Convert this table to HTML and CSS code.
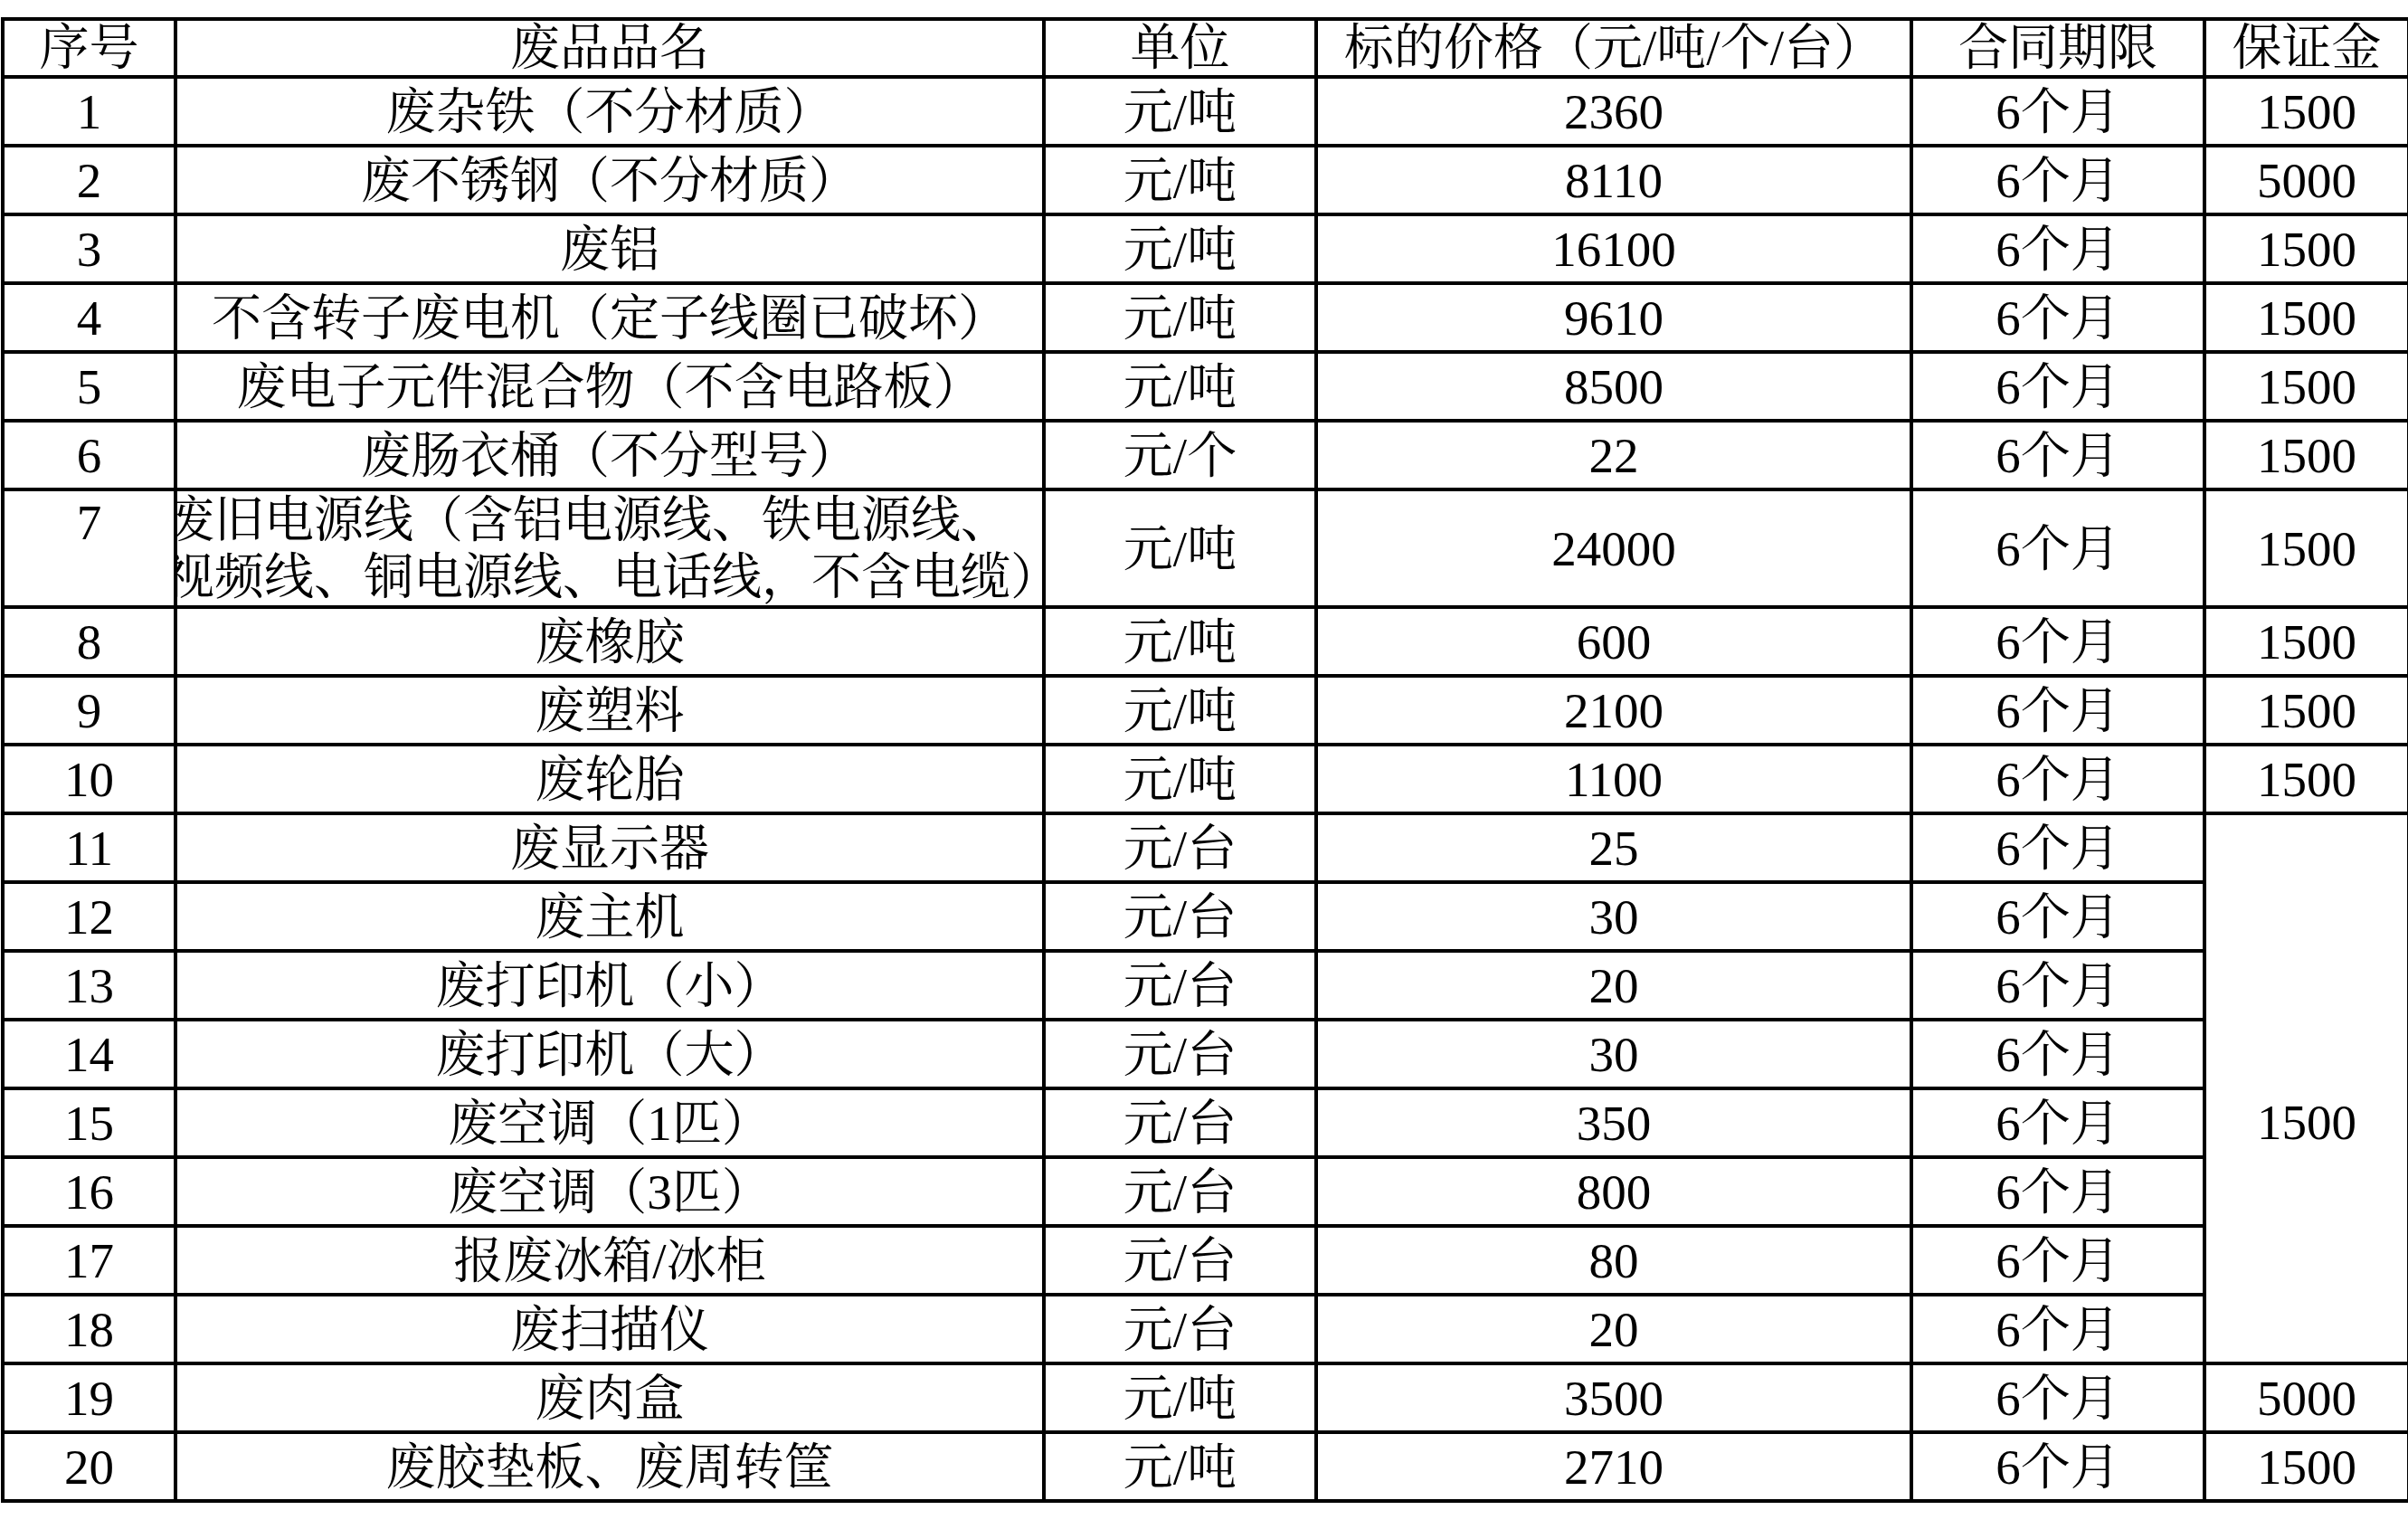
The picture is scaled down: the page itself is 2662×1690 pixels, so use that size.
FILE: index.html
```html
<!DOCTYPE html>
<html lang="zh-CN">
<head>
<meta charset="utf-8">
<title>废品价格表</title>
<link rel="stylesheet" href="styles.css">
</head>
<body>
<table class="sheet">
  <colgroup>
    <col class="c-seq">
    <col class="c-name">
    <col class="c-unit">
    <col class="c-price">
    <col class="c-term">
    <col class="c-dep">
  </colgroup>
  <tbody>
    <tr class="head"><td>序号</td><td>废品品名</td><td>单位</td><td>标的价格（元/吨/个/台）</td><td>合同期限</td><td>保证金</td></tr>
    <tr><td>1</td><td>废杂铁（不分材质）</td><td>元/吨</td><td>2360</td><td>6个月</td><td>1500</td></tr>
    <tr><td>2</td><td>废不锈钢（不分材质）</td><td>元/吨</td><td>8110</td><td>6个月</td><td>5000</td></tr>
    <tr><td>3</td><td>废铝</td><td>元/吨</td><td>16100</td><td>6个月</td><td>1500</td></tr>
    <tr><td>4</td><td>不含转子废电机（定子线圈已破坏）</td><td>元/吨</td><td>9610</td><td>6个月</td><td>1500</td></tr>
    <tr><td>5</td><td>废电子元件混合物（不含电路板）</td><td>元/吨</td><td>8500</td><td>6个月</td><td>1500</td></tr>
    <tr><td>6</td><td>废肠衣桶（不分型号）</td><td>元/个</td><td>22</td><td>6个月</td><td>1500</td></tr>
    <tr class="tall"><td class="top">7</td><td class="wrap"><div class="wrap-text"><span>废旧电源线（含铝电源线、铁电源线、</span><span>视频线、铜电源线、电话线，不含电缆）</span></div></td><td>元/吨</td><td>24000</td><td>6个月</td><td>1500</td></tr>
    <tr><td>8</td><td>废橡胶</td><td>元/吨</td><td>600</td><td>6个月</td><td>1500</td></tr>
    <tr><td>9</td><td>废塑料</td><td>元/吨</td><td>2100</td><td>6个月</td><td>1500</td></tr>
    <tr><td>10</td><td>废轮胎</td><td>元/吨</td><td>1100</td><td>6个月</td><td>1500</td></tr>
    <tr><td>11</td><td>废显示器</td><td>元/台</td><td>25</td><td>6个月</td><td rowspan="8" class="merged">1500</td></tr>
    <tr><td>12</td><td>废主机</td><td>元/台</td><td>30</td><td>6个月</td></tr>
    <tr><td>13</td><td>废打印机（小）</td><td>元/台</td><td>20</td><td>6个月</td></tr>
    <tr><td>14</td><td>废打印机（大）</td><td>元/台</td><td>30</td><td>6个月</td></tr>
    <tr><td>15</td><td>废空调（1匹）</td><td>元/台</td><td>350</td><td>6个月</td></tr>
    <tr><td>16</td><td>废空调（3匹）</td><td>元/台</td><td>800</td><td>6个月</td></tr>
    <tr><td>17</td><td>报废冰箱/冰柜</td><td>元/台</td><td>80</td><td>6个月</td></tr>
    <tr><td>18</td><td>废扫描仪</td><td>元/台</td><td>20</td><td>6个月</td></tr>
    <tr><td>19</td><td>废肉盒</td><td>元/吨</td><td>3500</td><td>6个月</td><td>5000</td></tr>
    <tr><td>20</td><td>废胶垫板、废周转筐</td><td>元/吨</td><td>2710</td><td>6个月</td><td>1500</td></tr>
  </tbody>
</table>
</body>
</html>
```

FILE: styles.css
```css
html, body {
  margin: 0;
  padding: 0;
  background: #ffffff;
}

body {
  padding: 19px 0 0 1px;
}

.sheet {
  border-collapse: collapse;
  table-layout: fixed;
  width: 2660px;
  font-family: "Liberation Serif", "Noto Serif CJK SC", "Noto Sans CJK SC", serif;
  font-size: 55px;
  line-height: 63px;
  color: #000;
}

.c-seq { width: 191px; }
.c-name { width: 960px; }
.c-unit { width: 301px; }
.c-price { width: 658px; }
.c-term { width: 324px; }
.c-dep { width: 226px; }

.sheet td {
  border: 4px solid #000;
  padding: 0;
  text-align: center;
  vertical-align: middle;
  white-space: nowrap;
  overflow: hidden;
}

.sheet tr {
  height: 76px;
}

.sheet tr.head {
  height: 64px;
}

.sheet tr.head td {
  line-height: 56px;
}

.sheet tr.tall {
  height: 130px;
}

.sheet td.top {
  vertical-align: top;
  padding-top: 3px;
}

.sheet td.wrap {
  text-align: left;
}

.wrap-text {
  margin-left: -14px;
  width: 1000px;
}

.wrap-text span {
  display: block;
}

.sheet td.merged {
  padding-top: 74px;
}
```
